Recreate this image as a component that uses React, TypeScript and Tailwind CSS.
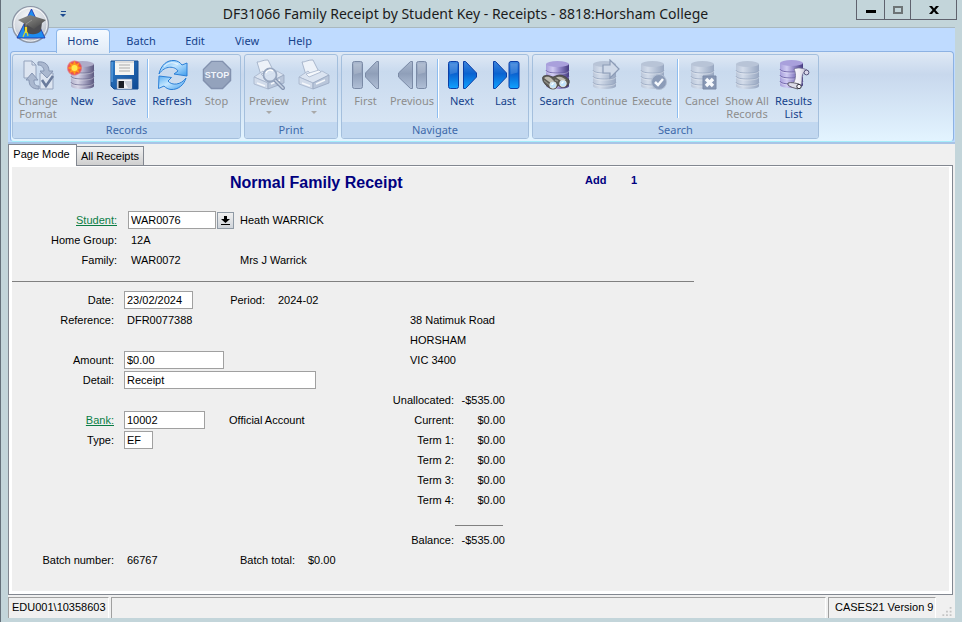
import React from "react";

type IconProps = { children: React.ReactNode };

function Icon({ children }: IconProps) {
  return (
    <svg className="h-8 w-8 shrink-0" viewBox="0 0 32 32" fill="none" aria-hidden="true">
      {children}
    </svg>
  );
}

/* Gradients shared by all ribbon icons */
function IconGradients() {
  return (
    <svg className="absolute h-0 w-0" aria-hidden="true">
      <defs>
        <linearGradient id="dbLive" x1="0" x2="1" y1="0" y2="0">
          <stop offset="0" stopColor="#b4b3cc" />
          <stop offset="0.3" stopColor="#d6d5e6" />
          <stop offset="0.6" stopColor="#a3a1bf" />
          <stop offset="1" stopColor="#5b587f" />
        </linearGradient>
        <linearGradient id="dbViolet" x1="0" x2="1" y1="0" y2="0">
          <stop offset="0" stopColor="#a79fdb" />
          <stop offset="0.3" stopColor="#cfcaf2" />
          <stop offset="0.6" stopColor="#9187c8" />
          <stop offset="1" stopColor="#453b80" />
        </linearGradient>
        <linearGradient id="dbOff" x1="0" x2="1" y1="0" y2="0">
          <stop offset="0" stopColor="#bac6d9" />
          <stop offset="0.3" stopColor="#d3dcea" />
          <stop offset="0.6" stopColor="#b9c5d8" />
          <stop offset="1" stopColor="#98a7c1" />
        </linearGradient>
        <linearGradient id="navOn" x1="0" x2="0" y1="0" y2="1">
          <stop offset="0" stopColor="#3f86dc" />
          <stop offset="0.45" stopColor="#0a62d0" />
          <stop offset="1" stopColor="#10a2ff" />
        </linearGradient>
        <linearGradient id="navOff" x1="0" x2="0" y1="0" y2="1">
          <stop offset="0" stopColor="#a9b7cd" />
          <stop offset="0.45" stopColor="#8f9fb9" />
          <stop offset="1" stopColor="#b0bfd6" />
        </linearGradient>
        <linearGradient id="swirl" x1="0" x2="1" y1="0" y2="1">
          <stop offset="0" stopColor="#5aaef2" />
          <stop offset="0.45" stopColor="#c3e6ff" />
          <stop offset="1" stopColor="#3d9bec" />
        </linearGradient>
        <linearGradient id="floppy" x1="0" x2="1" y1="0" y2="1">
          <stop offset="0" stopColor="#2f7cc8" />
          <stop offset="1" stopColor="#0f4a94" />
        </linearGradient>
        <radialGradient id="orb" cx="0.45" cy="0.3" r="0.75">
          <stop offset="0" stopColor="#f7f8fa" />
          <stop offset="0.6" stopColor="#d3d8df" />
          <stop offset="1" stopColor="#a4adba" />
        </radialGradient>
        <linearGradient id="cap" x1="0" x2="1" y1="0" y2="1">
          <stop offset="0" stopColor="#8f8f8d" />
          <stop offset="0.5" stopColor="#6e6e6c" />
          <stop offset="1" stopColor="#3e3e40" />
        </linearGradient>
        <radialGradient id="spark" cx="0.5" cy="0.5" r="0.5">
          <stop offset="0" stopColor="#ffe34a" />
          <stop offset="0.5" stopColor="#ff6a1c" />
          <stop offset="0.8" stopColor="#f0303c" stopOpacity="0.75" />
          <stop offset="1" stopColor="#f0303c" stopOpacity="0" />
        </radialGradient>
        <linearGradient id="paper" x1="0" x2="1" y1="0" y2="0">
          <stop offset="0" stopColor="#ffffff" />
          <stop offset="0.6" stopColor="#efeef6" />
          <stop offset="1" stopColor="#b9b7cc" />
        </linearGradient>
      </defs>
    </svg>
  );
}

function Cylinder({ fill, top, line }: { fill: string; top: string; line: string }) {
  return (
    <g>
      <path d="M5 5v22c0 2 5 3 11.500 3S28 29 28 27V5z" fill={fill} />
      <ellipse cx="16.500" cy="5" rx="11.500" ry="3" fill={top} />
      {[11, 17, 23].map((y) => (
        <g key={y}>
          <path d={`M5 ${y}c0 2 5 3 11.500 3S28 ${y + 2} 28 ${y}`} stroke={line} strokeWidth="0.800" />
          <path d={`M5 ${y + 1}c0 2 5 3 11.500 3S28 ${y + 3} 28 ${y + 1}`} stroke="#fff" strokeOpacity="0.400" strokeWidth="0.800" />
        </g>
      ))}
    </g>
  );
}

const DbLive = () => <Cylinder fill="url(#dbLive)" top="#aeacc8" line="#6f6d92" />;
const DbViolet = () => <Cylinder fill="url(#dbViolet)" top="#a9a0dc" line="#63599e" />;
const DbOff = () => <Cylinder fill="url(#dbOff)" top="#b8c4d7" line="#98a7c0" />;

const ChangeFormatIcon = () => (
  <Icon>
    <path d="M2 2h8l4 4v13H2z" fill="#dde5f1" stroke="#94a3bd" />
    <path d="M10 2v4h4" stroke="#94a3bd" />
    <path d="M18 14h13v16H18z" fill="#dde5f1" stroke="#94a3bd" />
    <path d="M16 3c7-1 11 3 11 9h4l-6 7-7-7h4c0-3-2-6-6-6z" fill="#aab8cf" stroke="#8696b3" />
    <path d="M4 21l6-7 6 7h-4c0 4 1 6 5 6v3C10 30 7 27 7 21z" fill="#aab8cf" stroke="#8696b3" />
    <path d="M20 21l4 6 7-10" stroke="#6a7b9c" strokeWidth="2.600" />
  </Icon>
);

const NewIcon = () => (
  <Icon>
    <DbLive />
    <circle cx="8.500" cy="9" r="8" fill="url(#spark)" />
    <path d="M8.500 1.500l1.500 4 3.800-2-2 3.800 4 1.700-4 1.500 2 3.800-3.800-2-1.500 4-1.500-4-3.800 2 2-3.800-4-1.500 4-1.700-2-3.800 3.800 2z" fill="#ff9a1f" />
    <circle cx="8.500" cy="9" r="3" fill="#ffe94f" />
  </Icon>
);

const SaveIcon = () => (
  <Icon>
    <path d="M3 2h27v28H6l-3-3z" fill="url(#floppy)" stroke="#174f92" />
    <path d="M7 2h19v14H7z" fill="#f4f4f2" />
    <path d="M7 2h19v2H7z" fill="#dcdcdc" />
    <path d="M11 6h11M11 9h11M11 12h11" stroke="#aaaaaa" strokeWidth="1.200" />
    <path d="M9 20h15v10H9z" fill="#f2f3f6" stroke="#7088a8" strokeWidth="0.600" />
    <path d="M10.500 22h5.500v7h-5.500z" fill="#1c1f26" />
    <path d="M16 22h7v7h-3z" fill="#c9ced8" />
    <path d="M4 3v20" stroke="#6bb0ee" />
  </Icon>
);

const RefreshIcon = () => (
  <Icon>
    <g fill="url(#swirl)" stroke="#2b7fd6" strokeLinejoin="round">
      <path d="M3 15C5 6 11 1 18 1.500c4 .3 6 2 8 4.500l5-2v13l-13-2 4-3C19 7 9 6 3 15z" />
      <path d="M30 19c-2 7-8 12-15 11.500-3-.3-5-1.500-7-3.500l-5.500 2.500L3 17l12.500 1.500L12 22c4 5 13 4 18-3z" />
    </g>
    <path d="M8 7.500c4-4 9-5 14-2" stroke="#ffffff" strokeOpacity="0.600" strokeWidth="1.300" />
  </Icon>
);

const StopIcon = () => (
  <Icon>
    <path d="M10.500 2.500h11l8 8v11l-8 8h-11l-8-8v-11z" fill="#93a2bc" stroke="#8291ae" strokeWidth="1.500" />
    <path d="M11 3h10l8 8v3c-9-2-17-2-26 1v-4z" fill="#a0aec6" />
    <text x="16" y="19" textAnchor="middle" fontFamily="Liberation Sans Narrow, Liberation Sans, sans-serif" fontWeight="700" fontSize="9" fill="#f1f5fb">
      STOP
    </text>
  </Icon>
);

function PrinterShape() {
  return (
    <g strokeLinejoin="round" strokeWidth="0.800">
      <path d="M8 16L4 3c4 0 5-2 11-2l6 12z" fill="#edf2f9" stroke="#9aa9c2" />
      <path d="M1 18l9-6 4 4 10-4 7 4-16 8z" fill="#dbe4f1" stroke="#a6b4ca" />
      <path d="M1 18l14 6v6L1 25z" fill="#d1dbea" stroke="#a6b4ca" />
      <path d="M15 24l16-8v8l-16 6z" fill="#b9c6da" stroke="#98a7c0" />
      <path d="M8 15l13-4 2 2-12 5z" fill="#f5f8fc" stroke="#a6b4ca" />
      <path d="M4 24l8 3M18 25l9-4" stroke="#f4f7fb" strokeWidth="1.500" />
    </g>
  );
}

const PrintIcon = () => (
  <Icon>
    <PrinterShape />
  </Icon>
);

const PreviewIcon = () => (
  <Icon>
    <PrinterShape />
    <path d="M22 21l8 8" stroke="#8797b3" strokeWidth="4" strokeLinecap="round" />
    <path d="M22 21l8 8" stroke="#c8d3e3" strokeWidth="1.500" strokeLinecap="round" />
    <circle cx="17" cy="16" r="6.500" fill="#d5e0ef" fillOpacity="0.900" stroke="#97a6bf" strokeWidth="1.800" />
    <path d="M13 14c1-3 5-4 7-2" stroke="#ffffff" strokeWidth="1.500" />
  </Icon>
);

function NavShape({ on, flip, barFirst }: { on: boolean; flip: boolean; barFirst: boolean }) {
  const fill = on ? "url(#navOn)" : "url(#navOff)";
  const stroke = on ? "#0c3fa6" : "#7a8aa6";
  const bar = barFirst ? 2.500 : flip ? 20.500 : 19;
  const tri = barFirst
    ? flip
      ? "M28.500 2.500v27h-2L15.500 18v-4L26.500 2.500z"
      : "M17.500 2.500h2L30.500 14v4L19.500 29.500h-2z"
    : flip
      ? "M16.500 2.500v27h-2L2.500 18v-4L14.500 2.500z"
      : "M3.500 2.500h2L16.500 14v4L5.500 29.500h-2z";
  return (
    <Icon>
      <rect x={bar} y="2.500" width="10" height="27" rx="2" fill={fill} stroke={stroke} />
      <path d={tri} fill={fill} stroke={stroke} strokeLinejoin="round" />
      <path d={`M${bar + 1.500} 4.500h7v9l-7 2z`} fill="#ffffff" fillOpacity="0.150" />
    </Icon>
  );
}

const SearchIcon = () => (
  <Icon>
    <DbViolet />
    <path d="M1.500 19c0-2 3-3 6-2.500L12 18l4-1.500c3-1 5-.5 8 1l4 3.500c1 3-1 6-4 7-3 .8-5 0-7-2-1 3-3 4.500-6 4-3-.6-7-4-9-8z" fill="#5b5a55" stroke="#3c3b3a" strokeWidth="0.700" />
    <path d="M3 19c2-2 5-1.500 7 0l3 3-4 1.500zM15 18.500c2-1.300 5-1 7 .3l3 2-5 1z" fill="#bdbbb0" />
    <path d="M3 21.500l5 4M14 21l3 1" stroke="#8f8d84" strokeWidth="1.400" />
    <circle cx="12" cy="26" r="3.300" fill="#bfe3fb" stroke="#e6e6e2" strokeWidth="0.900" />
    <circle cx="22" cy="24.500" r="3.300" fill="#bfe3fb" stroke="#e6e6e2" strokeWidth="0.900" />
    <path d="M10.500 26l2-2M20.500 24.500l2-2" stroke="#ffffff" strokeWidth="1.300" />
  </Icon>
);

const ContinueIcon = () => (
  <Icon>
    <DbOff />
    <path d="M15 6h7V1l9 9-9 9v-5h-7z" fill="#cfd9e8" stroke="#8b9bb6" strokeWidth="1.200" />
  </Icon>
);

const ExecuteIcon = () => (
  <Icon>
    <DbOff />
    <circle cx="23" cy="23" r="7.500" fill="#8c9cb8" stroke="#b2bfd3" />
    <path d="M19 23l3 3 5-6" stroke="#f6f9fd" strokeWidth="2.500" />
  </Icon>
);

const CancelIcon = () => (
  <Icon>
    <DbOff />
    <path d="M17 17h13v13H17z" fill="#8797b4" stroke="#7a8aa8" />
    <path d="M20 20l7 7M27 20l-7 7" stroke="#f6f9fd" strokeWidth="3.400" />
  </Icon>
);

const ShowAllIcon = () => (
  <Icon>
    <DbOff />
  </Icon>
);

const ResultsIcon = () => (
  <Icon>
    <g transform="translate(-3 -1)">
      <DbViolet />
    </g>
    <path d="M16 10c4-2 9-1 13 1-4 2-5 5-5 9 0 5-1 8-4 8l-10-3c2-1 5 0 6-2 2-4 2-9 0-13z" fill="url(#paper)" stroke="#6f6c92" strokeWidth="0.800" />
    <circle cx="28.500" cy="13.500" r="2.400" fill="#d8d6e8" stroke="#55527a" />
    <path d="M10 24c3-1 7 0 11 1l-1 5c-4-1-8-2-10-4z" fill="#dddce8" stroke="#44424f" strokeWidth="0.800" />
    <circle cx="21" cy="27.500" r="2.200" fill="#f2f2f7" stroke="#33323c" />
  </Icon>
);

type RibbonButtonProps = {
  icon: React.ReactNode;
  label: React.ReactNode;
  width: string;
  disabled?: boolean;
  menu?: boolean;
};

function RibbonButton({ icon, label, width, disabled, menu }: RibbonButtonProps) {
  return (
    <button
      type="button"
      disabled={disabled}
      className={`flex shrink-0 flex-col items-center whitespace-nowrap text-[11px] leading-[13px] ${width} ${
        disabled ? "text-[#8d8d8d]" : "text-[#15428b]"
      }`}
    >
      {icon}
      <span className="mt-[3px]">{label}</span>
      {menu && <span className="mt-1 border-x-[3px] border-t-[3px] border-x-transparent border-t-[#a9a9a9]" />}
    </button>
  );
}

function Separator() {
  return <span className="mx-px w-[2px] shrink-0 border-l border-[#8dbdf0] bg-white" />;
}

function RibbonGroup({ title, children }: { title: string; children: React.ReactNode }) {
  return (
    <section
      aria-label={title}
      className="flex h-[85px] shrink-0 flex-col overflow-hidden rounded-[3px] border border-[#a4bfdd] bg-linear-to-b from-[#dee8f5] via-[#c9daee] via-20% to-[#dbe8f6]"
    >
      <div className="flex min-h-0 flex-1 px-px pt-1 pb-1">{children}</div>
      <h2 className="h-4 shrink-0 bg-[#c2d8f0] text-center text-[11px] leading-4 text-[#3e6aaa]">{title}</h2>
    </section>
  );
}

const menuTabs = [
  { name: "Batch", width: "w-[58px]" },
  { name: "Edit", width: "w-[50px]" },
  { name: "View", width: "w-[54px]" },
  { name: "Help", width: "w-[52px]" },
];

function Ribbon() {
  return (
    <header className="border-t border-[#a9b8bf] bg-[#bfdbff] font-['Noto_Sans','Open_Sans',sans-serif]">
      <nav className="flex h-[23px] pl-12 text-[11px] text-[#15428b]">
        <button
          type="button"
          className="relative z-10 mt-px h-6 w-[54px] rounded-t-[4px] border border-b-0 border-[#8db8ea] bg-linear-to-b from-[#f5faff] to-[#e1ebf7]"
        >
          Home
        </button>
        <div className="flex pl-[2px]">
          {menuTabs.map((tab) => (
            <button key={tab.name} type="button" className={`pt-1 ${tab.width}`}>
              {tab.name}
            </button>
          ))}
        </div>
      </nav>
      <div className="border-b-2 border-[#a9c4e6] pr-px pl-[2px]">
        <div className="flex gap-[3px] rounded-[4px] border border-[#8db2e3] border-b-[#a5eefa] bg-linear-to-b from-[#dfe9f5] via-[#c8d8ed] via-25% to-[#e3f4ff] px-px pt-[2px] pb-[2px]">
          <RibbonGroup title="Records">
            <RibbonButton width="w-[48px]" disabled icon={<ChangeFormatIcon />} label={<>Change<br />Format</>} />
            <RibbonButton width="w-[40px]" icon={<NewIcon />} label="New" />
            <RibbonButton width="w-[44px]" icon={<SaveIcon />} label="Save" />
            <Separator />
            <RibbonButton width="w-[44px]" icon={<RefreshIcon />} label="Refresh" />
            <RibbonButton width="w-[45px]" disabled icon={<StopIcon />} label="Stop" />
          </RibbonGroup>
          <RibbonGroup title="Print">
            <RibbonButton width="w-[46px]" disabled menu icon={<PreviewIcon />} label="Preview" />
            <RibbonButton width="w-[44px]" disabled menu icon={<PrintIcon />} label="Print" />
          </RibbonGroup>
          <RibbonGroup title="Navigate">
            <RibbonButton width="w-[45px]" disabled icon={<NavShape on={false} flip barFirst />} label="First" />
            <RibbonButton width="w-[48px]" disabled icon={<NavShape on={false} flip barFirst={false} />} label="Previous" />
            <Separator />
            <RibbonButton width="w-[44px]" icon={<NavShape on flip={false} barFirst />} label="Next" />
            <RibbonButton width="w-[43px]" icon={<NavShape on flip={false} barFirst={false} />} label="Last" />
          </RibbonGroup>
          <RibbonGroup title="Search">
            <RibbonButton width="w-[46px]" icon={<SearchIcon />} label="Search" />
            <RibbonButton width="w-[48px]" disabled icon={<ContinueIcon />} label="Continue" />
            <RibbonButton width="w-[48px]" disabled icon={<ExecuteIcon />} label="Execute" />
            <Separator />
            <RibbonButton width="w-[44px]" disabled icon={<CancelIcon />} label="Cancel" />
            <RibbonButton width="w-[46px]" disabled icon={<ShowAllIcon />} label={<>Show All<br />Records</>} />
            <RibbonButton width="w-[47px]" icon={<ResultsIcon />} label={<>Results<br />List</>} />
          </RibbonGroup>
        </div>
      </div>
    </header>
  );
}

function TitleBar() {
  return (
    <div className="flex h-[27px] items-start font-['Noto_Sans','Open_Sans',sans-serif]">
      <div className="w-[67px] pt-[11px] pl-[52px]">
        <button type="button" aria-label="Customize quick access" className="flex flex-col items-center gap-[2px]">
          <span className="h-px w-[5px] bg-[#1c4a90]" />
          <span className="border-x-[3px] border-t-[3px] border-x-transparent border-t-[#1c4a90]" />
        </button>
      </div>
      <h1 className="flex-1 text-center text-[14px] leading-7 whitespace-nowrap text-[#1b1b1b]">
        DF31066 Family Receipt by Student Key - Receipts - 8818:Horsham College
      </h1>
      <div className="flex h-5 border border-t-0 border-[#5f626e]">
        <button type="button" aria-label="Minimize" className="flex w-[27px] items-center justify-center">
          <span className="mt-[3px] h-[3px] w-[10px] bg-black" />
        </button>
        <button type="button" aria-label="Maximize" className="flex w-[27px] items-center justify-center border-x border-[#5f626e]">
          <span className="h-2 w-[10px] border-2 border-[#6d7476]" />
        </button>
        <button type="button" aria-label="Close" className="flex w-[45px] items-center justify-center">
          <svg className="h-2 w-[10px]" viewBox="0 0 10 8" aria-hidden="true">
            <path d="M0 0h3l2 2.500L7 0h3L6.500 4 10 8H7L5 5.500 3 8H0l3.500-4z" fill="#000" />
          </svg>
        </button>
      </div>
    </div>
  );
}

function AppOrb() {
  return (
    <button type="button" aria-label="Application menu" className="absolute top-[5px] left-[10px] z-20">
      <svg className="h-[39px] w-[39px]" viewBox="0 0 39 39" aria-hidden="true">
        <circle cx="19.500" cy="19.500" r="18" fill="url(#orb)" stroke="#8b95a5" strokeWidth="1.200" />
        <circle cx="19.500" cy="19.500" r="16.500" fill="none" stroke="#ffffff" strokeOpacity="0.800" />
        <path d="M20.500 4L34 33H6z" fill="#1e8cf0" stroke="#1a2fa8" strokeWidth="0.800" />
        <path d="M13 18v7c4 5 12 6 17 1l1-9z" fill="#4c4c50" />
        <path d="M7 15l12-5 16 5-12 9z" fill="url(#cap)" />
        <path d="M21 15l-6 4v4" stroke="#9a9a98" strokeWidth="0.800" fill="none" />
        <path d="M15 22v6" stroke="#f1d928" strokeWidth="2.200" />
        <path d="M14 27l-2 5M16 27l1 4" stroke="#c7d23c" strokeWidth="1.200" />
      </svg>
    </button>
  );
}

function Field({ id, value, width }: { id: string; value: string; width: string }) {
  return (
    <input
      id={id}
      type="text"
      defaultValue={value}
      className={`h-[18px] border border-[#a0a0a0] bg-white px-[2px] text-[11px] leading-4 text-black outline-none ${width}`}
    />
  );
}

type LineProps = {
  label?: string;
  htmlFor?: string;
  lookup?: boolean;
  children?: React.ReactNode;
};

function UpperLine({ label, htmlFor, lookup, children }: LineProps) {
  return (
    <div className="flex h-5 items-center gap-[11px]">
      <label htmlFor={htmlFor} className={`w-[105px] text-right ${lookup ? "text-[#0a7d45] underline" : ""}`}>
        {label}
      </label>
      {children}
    </div>
  );
}

function LowerLine({ label, htmlFor, lookup, children }: LineProps) {
  return (
    <div className="flex h-5 items-center gap-[10px]">
      <label htmlFor={htmlFor} className={`w-[102px] text-right ${lookup ? "text-[#0a7d45] underline" : ""}`}>
        {label}
      </label>
      {children}
    </div>
  );
}

const balances = [
  ["Unallocated:", "-$535.00"],
  ["Current:", "$0.00"],
  ["Term 1:", "$0.00"],
  ["Term 2:", "$0.00"],
  ["Term 3:", "$0.00"],
  ["Term 4:", "$0.00"],
];

function ReceiptForm() {
  return (
    <form className="flex-1 bg-[#efefef] text-[11px] leading-4 text-black" onSubmit={(e) => e.preventDefault()}>
      <div className="flex h-[43px] pt-1 font-bold text-[#000080]">
        <h2 className="w-[573px] pl-[218px] text-[16px] leading-6">Normal Family Receipt</h2>
        <span className="w-[46px] pt-px">Add</span>
        <span className="pt-px">1</span>
      </div>

      <UpperLine label="Student:" htmlFor="student" lookup>
        <div className="flex w-[101px] items-center gap-px">
          <Field id="student" value="WAR0076" width="w-[88px]" />
          <button
            type="button"
            aria-label="Look up student"
            className="flex h-[17px] w-[17px] shrink-0 items-center justify-center border border-[#8f9aa5] bg-linear-to-b from-[#f0f0f0] to-[#cfd4da]"
          >
            <svg className="h-[9px] w-[9px]" viewBox="0 0 9 9" aria-hidden="true">
              <path d="M3 0h3v3h3L4.500 7 0 3h3zM0 8h9v1H0z" fill="#000" />
            </svg>
          </button>
        </div>
        <span>Heath WARRICK</span>
      </UpperLine>
      <UpperLine label="Home Group:">
        <span className="pl-[3px]">12A</span>
      </UpperLine>
      <UpperLine label="Family:">
        <span className="w-[101px] pl-[3px]">WAR0072</span>
        <span>Mrs J Warrick</span>
      </UpperLine>

      <hr className="mt-[11px] mb-2 w-[682px] border-[#808080]" />

      <div className="flex">
        <div className="w-[371px]">
          <LowerLine label="Date:" htmlFor="date">
            <div className="w-[95px]">
              <Field id="date" value="23/02/2024" width="w-[69px]" />
            </div>
            <span className="w-[36px] text-right">Period:</span>
            <span className="pl-[3px]">2024-02</span>
          </LowerLine>
          <LowerLine label="Reference:">
            <span className="pl-[3px]">DFR0077388</span>
          </LowerLine>
          <LowerLine />
          <LowerLine label="Amount:" htmlFor="amount">
            <Field id="amount" value="$0.00" width="w-[100px]" />
          </LowerLine>
          <LowerLine label="Detail:" htmlFor="detail">
            <Field id="detail" value="Receipt" width="w-[192px]" />
          </LowerLine>
          <LowerLine />
          <LowerLine label="Bank:" htmlFor="bank" lookup>
            <div className="w-[95px]">
              <Field id="bank" value="10002" width="w-[81px]" />
            </div>
            <span>Official Account</span>
          </LowerLine>
          <LowerLine label="Type:" htmlFor="type">
            <Field id="type" value="EF" width="w-[29px]" />
          </LowerLine>
          <div className="h-[100px]" />
          <LowerLine label="Batch number:">
            <span className="w-[95px] pl-[3px]">66767</span>
            <span className="w-[66px] text-right">Batch total:</span>
            <span className="pl-[3px]">$0.00</span>
          </LowerLine>
        </div>

        <div>
          <address className="pt-5 pl-[27px] leading-5 not-italic">
            38 Natimuk Road
            <br />
            HORSHAM
            <br />
            VIC 3400
          </address>
          <table className="mt-5 table-fixed border-collapse">
            <tbody>
              {balances.map(([name, amount]) => (
                <tr key={name} className="h-5">
                  <th scope="row" className="w-[71px] p-0 text-right font-normal">{name}</th>
                  <td className="w-[51px] p-0 text-right">{amount}</td>
                </tr>
              ))}
            </tbody>
            <tfoot>
              <tr className="h-5">
                <td className="p-0" />
                <td className="p-0">
                  <div className="mt-[10px] mr-[2px] ml-px h-px bg-[#808080]" />
                </td>
              </tr>
              <tr className="h-5">
                <th scope="row" className="p-0 text-right font-normal">Balance:</th>
                <td className="p-0 text-right">-$535.00</td>
              </tr>
            </tfoot>
          </table>
        </div>
      </div>
    </form>
  );
}

function StatusBar() {
  return (
    <footer className="flex h-[21px] items-stretch gap-[2px] bg-[#f0f0f0] text-[11px] leading-[19px] text-black">
      <div className="w-[101px] border-t border-r border-l border-[#a0a0a0] border-r-white pl-[3px] whitespace-nowrap">
        EDU001\10358603
      </div>
      <div className="flex-1 border-t border-r border-l border-[#a0a0a0] border-r-white" />
      <div className="w-[108px] border-t border-r border-l border-[#a0a0a0] border-r-white pl-[6px] whitespace-nowrap">
        CASES21 Version 9
      </div>
      <svg className="h-[11px] w-[17px] self-end pb-px" viewBox="0 0 17 11" aria-hidden="true">
        <path d="M12 0h2v2h-2zM8 4h2v2H8zM12 4h2v2h-2zM4 8h2v2H4zM8 8h2v2H8zM12 8h2v2h-2z" fill="#c4c4c4" />
      </svg>
    </footer>
  );
}

export default function App() {
  return (
    <div className="relative flex min-h-screen w-full flex-col border-l border-[#65707a] bg-[#c3d5da] pr-[5px] pb-1 pl-[7px] font-['Liberation_Sans',Arial,sans-serif]">
      <IconGradients />
      <AppOrb />
      <TitleBar />
      <div className="mr-[2px] flex flex-1 flex-col">
        <Ribbon />
        <main className="flex flex-1 flex-col bg-[#f0f0f0] pr-[2px] pb-[2px]">
          <div role="tablist" className="flex h-[21px] text-[11px]">
            <button
              type="button"
              role="tab"
              aria-selected="true"
              className="relative z-10 h-[22px] w-[69px] border border-b-0 border-[#828790] bg-white pr-[2px] pb-[2px]"
            >
              Page Mode
            </button>
            <button
              type="button"
              role="tab"
              aria-selected="false"
              className="mt-[2px] w-[67px] border border-b-0 border-l-0 border-[#828790] bg-linear-to-b from-[#f2f2f2] to-[#cfcfcf]"
            >
              All Receipts
            </button>
          </div>
          <div className="flex flex-1 flex-col border border-[#828790] bg-white px-[3px] pt-px pb-[3px]">
            <ReceiptForm />
          </div>
        </main>
        <StatusBar />
      </div>
    </div>
  );
}
